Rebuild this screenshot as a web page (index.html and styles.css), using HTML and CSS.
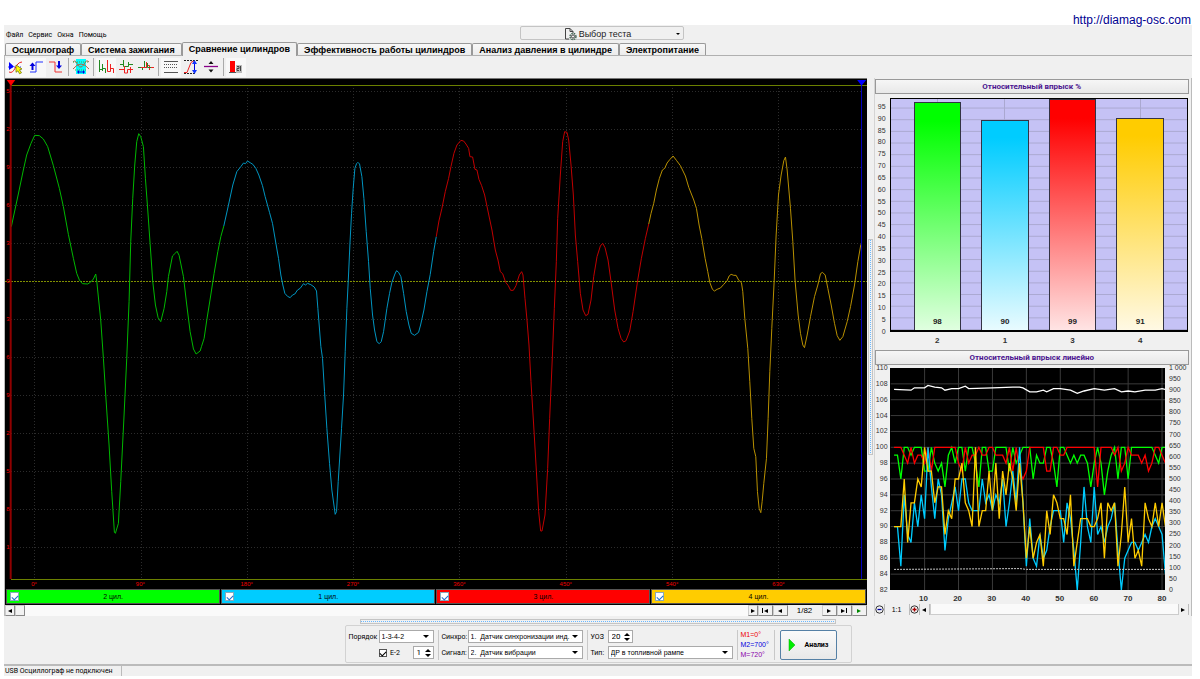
FILE: index.html
```html
<!DOCTYPE html>
<html lang="ru">
<head>
<meta charset="utf-8">
<title>Diamag</title>
<link rel="stylesheet" href="styles.css">
</head>
<body>
<header class="site"><a href="#">http://diamag-osc.com</a></header>
<div class="app">
  <div class="menu-row">
    <nav class="menu"><button>Файл</button><button>Сервис</button><button>Окна</button><button>Помощь</button></nav>
    <button class="test-select">
      <svg width="14" height="14" viewBox="0 0 14 14" fill="none" stroke="#444"><path d="M5 12H1.500V1.500H6L9 4.500V6M6 1.500V4.500H9"/><circle cx="9" cy="9.500" r="3" stroke="#465" stroke-width="1.400" stroke-dasharray="1.600 .8"/><circle cx="9" cy="9.500" r="1.600"/></svg>
      <span>Выбор теста</span><i class="down small"></i>
    </button>
  </div>
  <nav class="tabs">
    <button>Осциллограф</button><button>Система зажигания</button><button class="active">Сравнение цилиндров</button><button>Эффективность работы цилиндров</button><button>Анализ давления в цилиндре</button><button>Электропитание</button>
  </nav>
  <div class="toolbar">
    <button class="on" aria-label="Курсор"><svg viewBox="0 0 18 18" fill="none"><path d="M1 9H15" stroke="#33f" stroke-dasharray="1 1"/><path d="M2 14C8 17 8 4 15 4" stroke="#e22"/><path d="M2 4V12L7 8.500z" fill="#00f"/><path d="M9 7l6 4-2.500.8 2 3-2 1-1.500-3-2 1.500z" fill="#ff0" stroke="#660" stroke-width=".7"/></svg></button>
    <button class="on" aria-label="Фронт"><svg viewBox="0 0 18 18" fill="none"><path d="M3 14H9V4H16" stroke="#23f"/><path d="M5.500 12V6" stroke="#00d" stroke-width="2"/><path d="M2.500 8l3-3.500 3 3.500z" fill="#00d"/></svg></button>
    <button aria-label="Спад"><svg viewBox="0 0 18 18" fill="none"><path d="M2 4H8V14H15" stroke="#e33"/><path d="M12 3V8" stroke="#00d" stroke-width="2"/><path d="M9 7.500h6l-3 3.500z" fill="#00d"/></svg></button>
    <hr>
    <button aria-label="Окно"><svg viewBox="0 0 18 18" fill="none"><path d="M4 1H14V16H4z" fill="#0ff"/><path d="M1 4C5 0 5 10 9 9S13 0 17 4M1 11Q9 1 17 11" stroke="#a64"/><path d="M1 4H17M3 12H15" stroke="#3a5" stroke-dasharray="1 1"/><path d="M6 14h6" stroke="#00d"/><path d="M5 14l2-2v4zM13 14l-2-2v4z" fill="#00d"/></svg></button>
    <hr>
    <button class="on" aria-label="Вид 1"><svg viewBox="0 0 18 18" fill="none"><path d="M2.500 2V14M2.500 11.500H5.500M5.500 13V6M5.500 10.500H8.500V15" stroke="#282"/><path d="M10.500 2V13.500H13.500V6M13.500 10.500H16.500V15" stroke="#e22"/></svg></button>
    <button aria-label="Вид 2"><svg viewBox="0 0 18 18" fill="none"><path d="M3 6.500H6.500V2V8.500H11.500V4V6.500H16" stroke="#282"/><path d="M2 11.500H7.500V8V15H10.500V11.500H16M13.500 9V15" stroke="#e22"/></svg></button>
    <button aria-label="Вид 3"><svg viewBox="0 0 18 18" fill="none"><path d="M1 9.500H5.500V12M7.500 3V9.500H10" stroke="#282"/><path d="M4 9.500H9.500V4V7.500H12.500V12M12.500 9.500H17" stroke="#e22"/><path d="M10.500 5V9.500H14" stroke="#282"/></svg></button>
    <hr>
    <button class="on" aria-label="Линии"><svg viewBox="0 0 18 18" fill="none" stroke="#555"><path d="M2 3.500H16M2 14.500H16"/><path d="M2 6.500H16M2 9.500H16" stroke-dasharray="1 1"/></svg></button>
    <button aria-label="Размах"><svg viewBox="0 0 18 18" fill="none"><path d="M2 2.500H16M2 15.500H14" stroke="#222" stroke-dasharray="2 1"/><path d="M2 14.500H5L9 4.500Q11 2 14 6" stroke="#e22"/><path d="M12.500 4V14" stroke="#00d"/><path d="M10 6l2.500-4L15 6zM10 12l2.500 4L15 12z" fill="#13f"/></svg></button>
    <button aria-label="Середина"><svg viewBox="0 0 18 18"><path d="M2 8.500H16" stroke="#808" stroke-width="1.300"/><path d="M6.500 6L9 3l2.500 3zM6.500 11.500h5L9 14.500z" fill="#111"/></svg></button>
    <hr>
    <button class="on" aria-label="Гистограмма"><svg viewBox="0 0 18 18"><path d="M3 3h5v11H3z" fill="#f00"/><path d="M2 14.500H15" stroke="#555"/><path d="M9 7h6v8H9z" fill="#bbb"/><path d="M10 8.500h2v2h-2v2h2M13.500 8v5" stroke="#444" fill="none"/></svg></button>
  </div>

  <main class="main">
    <section class="scope">
      <div class="screen">
        <svg class="wave" viewBox="15 12 2583 1527" preserveAspectRatio="none">
          <path class="grid" d="M33 49H2583M33 163H2583M33 277H2583M33 391H2583M33 505H2583M33 733H2583M33 847H2583M33 961H2583M33 1075H2583M33 1189H2583M33 1303H2583M33 1417H2583M104 40V1512M424 40V1512M742 40V1512M1060 40V1512M1378 40V1512M1699 40V1512M2016 40V1512M2335 40V1512"/>
          <path class="edge" d="M33 31H2598M33 1512H2598"/>
          <path class="zero" d="M15 619H2598"/>
          <polyline class="green" points="34,455 55,357 70,285 80,240 93,205 104,181 118,182 130,192 143,215 160,272 178,340 190,395 205,478 220,550 230,595 238,615 247,626 263,627 272,621 280,612 287,597 290,618 302,735 310,850 318,975 327,1110 335,1250 343,1372 346,1375 355,1345 362,1220 372,1020 380,850 387,680 392,500 398,370 404,270 410,200 416,176 422,185 430,215 436,310 443,405 450,505 458,620 466,690 474,728 482,740 492,700 500,650 505,605 517,543 525,535 531,529 537,541 550,605 560,690 570,770 580,822 588,837 600,828 604,815 612,790 620,735 632,660 642,595 653,530 662,485 671,453"/>
          <g transform="translate(660 0)"><polyline class="blue" points="11,453 25,390 38,330 50,290 62,275 70,264 76,266 82,258 90,263 98,268 107,280 116,300 127,332 135,365 148,412 157,445 168,510 175,550 182,600 188,630 194,655 202,664 210,668 217,660 224,657 232,645 240,640 250,626 256,630 262,625 272,629 282,636 289,648 293,700 302,815 307,850 313,950 320,1060 328,1165 335,1245 345,1318 349,1310 354,1220 364,1060 370,960 375,830 380,700 385,600 389,510 394,415 399,340 404,280 409,266 413,262 418,267 425,305 431,370 438,470 445,560 450,640 457,720 463,765 470,800 477,806 483,800 490,770 500,700 508,655 515,622 524,597 529,587 535,592 542,605 550,655 558,710 566,750 573,775 583,781 595,772 601,750 611,705 620,650 630,598 640,530 648,485"/></g>
          <g transform="translate(1260 0)"><polyline class="red" points="48,485 56,438 65,400 75,350 85,310 92,275 101,235 110,210 122,196 130,198 137,207 145,220 149,245 157,246 164,283 170,285 176,313 184,332 193,360 203,408 215,465 225,525 233,555 240,590 247,596 256,622 264,632 271,646 279,646 287,632 297,600 304,590 308,600 314,670 320,735 326,810 332,920 340,1050 348,1185 355,1310 361,1368 365,1368 374,1320 382,1180 388,1030 395,870 402,700 408,560 412,430 420,300 427,200 433,170 440,172 445,195 452,270 459,360 465,480 472,560 480,655 488,705 496,722 503,718 512,675 520,605 530,545 540,513 547,505 554,518 563,555 572,620 583,705 593,760 602,790 610,801 617,797 628,768 638,710 652,615 663,550 675,490 685,447"/></g>
          <g transform="translate(1890 0)"><polyline class="gold" points="55,447 62,415 70,385 78,345 87,310 96,285 103,280 110,264 118,254 128,243 138,256 150,272 165,303 175,337 190,375 198,400 206,450 214,490 224,550 232,590 238,622 246,643 252,648 260,643 270,639 280,628 290,617 296,603 302,598 310,601 317,601 325,616 333,623 337,650 343,730 352,820 358,920 364,1030 370,1120 376,1145 381,1250 386,1300 391,1313 395,1280 400,1225 408,1150 413,1030 418,890 424,760 431,620 437,480 444,360 452,300 460,257 465,246 470,285 480,400 487,500 494,620 503,720 510,775 517,810 522,818 530,780 540,725 552,665 562,630 570,596 576,592 584,600 592,640 602,690 612,745 620,782 628,796 637,785 650,740 660,695 672,630 682,560 691,508"/></g>
          <path class="cursor-a" d="M32 20V1512"/><path class="cursor-b" d="M2583 20V1512"/>
          <path class="flag-a" d="M20 15H46L33 32z"/><path class="flag-b" d="M2570 15H2597L2583 32z"/>
        </svg>
        <div class="levels"><span>5</span><span>2</span><span>9</span><span>6</span><span>3</span><span>0</span><span>3</span><span>6</span><span>9</span><span>2</span><span>5</span><span>8</span><span>1</span></div>
        <div class="angles"><span>0°</span><span>90°</span><span>180°</span><span>270°</span><span>360°</span><span>450°</span><span>540°</span><span>630°</span></div>
      </div>
      <div class="cylinders">
        <label class="c2"><input type="checkbox" checked><span>2 цил.</span></label>
        <label class="c1"><input type="checkbox" checked><span>1 цил.</span></label>
        <label class="c3"><input type="checkbox" checked><span>3 цил.</span></label>
        <label class="c4"><input type="checkbox" checked><span>4 цил.</span></label>
      </div>
      <div class="scroll">
        <button class="narrow" aria-label="Влево"><i class="left"></i></button><button class="narrow" aria-label="Ползунок"></button><div class="track"></div><button class="narrow" aria-label="Вправо"><i class="right"></i></button>
        <button aria-label="Первый"><i class="bar"></i><i class="left"></i></button><button aria-label="Назад"><i class="left"></i></button><output>1/82</output><button aria-label="Вперёд"><i class="right"></i></button><button aria-label="Последний"><i class="right"></i><i class="bar"></i></button><button aria-label="Пуск"><i class="right go"></i></button>
      </div>
    </section>
    <div class="splitter vertical"></div>
    <aside class="side">
      <section class="card">
        <h2>Относительный впрыск %</h2>
        <div class="bars">
          <div class="bar-scale"><span>95</span><span>90</span><span>85</span><span>80</span><span>75</span><span>70</span><span>65</span><span>60</span><span>55</span><span>50</span><span>45</span><span>40</span><span>35</span><span>30</span><span>25</span><span>20</span><span>15</span><span>10</span><span>5</span><span>0</span></div>
          <div class="bar-plot">
            <div class="slot"><div class="b2" style="height:98.9%">98</div></div>
            <div class="slot"><div class="b1" style="height:90.9%">90</div></div>
            <div class="slot"><div class="b3" style="height:100%">99</div></div>
            <div class="slot"><div class="b4" style="height:91.9%">91</div></div>
          </div>
          <div class="bar-names"><span>2</span><span>1</span><span>3</span><span>4</span></div>
        </div>
      </section>
      <section class="card">
        <h2>Относительный впрыск линейно</h2>
        <div class="lines">
          <div class="line-scale"><span>110</span><span>108</span><span>106</span><span>104</span><span>102</span><span>100</span><span>98</span><span>96</span><span>94</span><span>92</span><span>90</span><span>88</span><span>86</span><span>84</span><span>82</span></div>
          <svg class="line-plot" viewBox="-0.200 0 81.200 28" preserveAspectRatio="none">
            <path class="mesh" d="M0 2H81M0 4H81M0 6H81M0 8H81M0 10H81M0 12H81M0 14H81M0 16H81M0 18H81M0 20H81M0 22H81M0 24H81M0 26H81M10 0V28M20 0V28M30 0V28M40 0V28M50 0V28M60 0V28M70 0V28M80 0V28"/>
            <g transform="scale(1 -1) translate(0 -110)">
              <polyline class="green" points="1,99 2,99 3,96 4,100 5,100 6,99 7,100 8,100 9,100 10,97 11,97 12,100 13,98 14,97 15,98 16,95 17,99 18,100 19,98 20,100 21,100 22,97 23,100 24,100 25,98 26,95 27,100 28,100 29,97 30,97 31,100 34,100 35,97 36,100 37,98 38,99 39,100 41,100 42,96 43,99 44,98 45,98 46,100 47,100 48,98 49,95 50,100 51,100 52,99 53,98 54,99 55,98 56,99 57,99 58,98 59,95 60,98 61,100 62,98 63,94 64,97 65,99 66,100 67,96 68,100 69,100 70,96 71,100 77,100 78,99 79,98 80,100 81,100"/>
              <polyline class="red" points="1,100 3,100 4,99 5,98 6,100 7,98 8,99 9,99 10,98 11,100 12,97 13,100 19,100 20,98 21,97 22,100 23,98 24,99 25,99 26,100 27,99 28,99 29,100 30,100 31,99 33,99 34,98 35,100 36,97 37,100 38,97 39,96 40,97 41,100 45,100 46,97 47,97 48,100 49,100 50,99 51,99 52,100 60,100 61,95 62,100 65,100 66,99 67,100 68,97 69,98 70,100 71,99 73,99 74,98 75,99 76,97 77,98 78,100 79,100 80,99 81,98"/>
              <polyline class="blue" points="1,90 2,90 3,85 4,94 5,89 6,88 7,93 8,90 9,94 10,91 11,100 12,95 13,91 14,96 15,94 16,87 17,91 18,93 19,95 20,92 21,96 22,96 23,93 24,92 26,92 27,96 28,93 29,94 30,92 31,94 32,93 33,96 34,90 35,93 36,97 37,93 38,100 39,93 40,85 41,91 42,86 43,85 44,89 45,86 46,87 47,90 48,92 50,92 51,88 52,93 53,91 54,87 55,82 56,88 57,95 58,90 59,88 60,95 61,89 62,90 63,88 64,90 65,91 66,93 67,87 68,82 69,86 70,87 71,88 72,88 73,87 74,88 75,89 76,88 77,90 78,91 79,90 80,89 81,84"/>
              <polyline class="gold" points="1,90 3,90 4,96 5,88 6,93 7,93 8,96 9,95 10,100 11,97 12,97 13,93 14,95 15,95 16,89 17,92 18,91 19,96 20,96 21,98 22,93 23,92 24,90 25,100 26,90 27,92 28,92 29,97 30,92 31,98 32,91 33,97 34,94 35,98 36,96 37,92 38,98 39,93 40,86 41,90 42,86 43,88 44,89 45,85 46,92 47,89 48,94 49,93 50,91 51,91 52,89 53,94 54,85 55,88 56,91 58,91 59,90 60,90 61,91 62,93 63,86 64,93 65,92 66,93 67,85 68,89 69,95 70,88 71,91 72,86 73,87 74,85 75,93 76,91 77,90 78,93 79,90 80,93 81,90"/>
              <polyline class="white" points="1,107.3 6,107.2 7,107.5 10,107.5 11,107.8 13,107.6 15,107.5 16,107.2 18,107.4 20,107.4 22,107.7 23,107.4 30,107.5 36,107.6 38,107.6 39,107.5 41,107 43,107 45,107.2 46,107 48,107.4 50,107.4 53,107.2 55,106.8 57,107.1 60,107.4 63,107.2 66,107.4 68,107 70,107.1 72,107 75,107.2 78,107.2 80,107.4 81,107.3"/>
              <polyline class="base" points="1,84.6 38,84.7 40,84.6 81,84.6"/>
            </g>
          </svg>
          <div class="pressure-scale"><span>1 000</span><span>950</span><span>900</span><span>850</span><span>800</span><span>750</span><span>700</span><span>650</span><span>600</span><span>550</span><span>500</span><span>450</span><span>400</span><span>350</span><span>300</span><span>250</span><span>200</span><span>150</span><span>100</span><span>50</span><span>0</span></div>
          <div class="frames"><span>10</span><span>20</span><span>30</span><span>40</span><span>50</span><span>60</span><span>70</span><span>80</span></div>
        </div>
        <div class="zoomer">
          <button aria-label="Уменьшить"><svg width="9" height="9" viewBox="0 0 9 9" fill="none" stroke="#333"><circle cx="4.500" cy="4.500" r="3.700"/><path d="M2.500 4.500h4" stroke="#00a" stroke-width="1.300"/></svg></button><button class="ratio">1:1</button><button aria-label="Увеличить"><svg width="9" height="9" viewBox="0 0 9 9" fill="none" stroke="#333"><circle cx="4.500" cy="4.500" r="3.700"/><path d="M2.500 4.500h4M4.500 2.500v4" stroke="#a00" stroke-width="1.300"/></svg></button><button aria-label="Влево"><i class="left"></i></button><div class="track"></div><button aria-label="Вправо"><i class="right"></i></button>
        </div>
      </section>
    </aside>
  </main>

  <div class="splitter horizontal"></div>
  <form class="settings">
    <div class="group order">
      <label for="order">Порядок</label><div class="pick"><select id="order"><option>1-3-4-2</option></select></div>
      <label class="check"><input type="checkbox" checked><span>E-2</span></label>
      <div class="spin"><input type="text" value="1" aria-label="Номер"><span class="arrows"><i class="up"></i><i class="down"></i></span></div>
    </div>
    <div class="group source">
      <label for="sync">Синхро:</label><div class="pick"><select id="sync"><option>1.&nbsp; Датчик синхронизации инд. .</option></select></div>
      <label for="signal">Сигнал:</label><div class="pick"><select id="signal"><option>2.&nbsp; Датчик вибрации</option></select></div>
    </div>
    <div class="group kind">
      <label for="uoz">УОЗ</label><div class="spin"><input id="uoz" type="text" value="20"><span class="arrows"><i class="up"></i><i class="down"></i></span></div>
      <label for="type">Тип:</label><div class="pick"><select id="type"><option>ДР в топливной рампе</option></select></div>
    </div>
    <div class="group marks"><span class="m1">M1=0°</span><span class="m2">M2=700°</span><span class="m3">M=720°</span></div>
    <button type="button" class="analyse"><svg width="8" height="12" viewBox="0 0 8 12"><path d="M1 0L7 6L1 12z" fill="#0e0" stroke="#0a0" stroke-width=".5"/></svg><span>Анализ</span></button>
  </form>
  <footer class="status"><span>USB Осциллограф не подключен</span><span></span></footer>
</div>
</body>
</html>
```
FILE: styles.css
```css
* { box-sizing: border-box; }
body {
  margin: 0; padding: 0 8px 3px 4px; height: 100vh; min-height: 560px;
  display: flex; flex-direction: column; background: #fff; color: #000;
  font-family: "Liberation Sans", Arial, sans-serif; font-size: 7px;
}
button, input, select { font: inherit; color: inherit; margin: 0; padding: 0; border: 0; border-radius: 0; background: none; }
button { display: flex; align-items: center; justify-content: center; }
.site { display: flex; justify-content: flex-end; padding: 15px 1px 0 0; font-size: 12px; line-height: 10px; }
.site a { color: #000090; text-decoration: none; position: relative; z-index: 1; }
.app { flex: 1; min-height: 0; display: flex; flex-direction: column; background: #f0f0f0; }

.menu-row { display: grid; grid-template-columns: 1fr 164px 1fr; padding: 1px 0 2px 8px; }
.menu { display: flex; align-items: flex-end; gap: 5px; margin-left: -6px; font-family: Roboto, sans-serif; line-height: 10px; }
.test-select { height: 14px; border: 1px solid #c4c4c4; border-radius: 2px; font-size: 9px; gap: 1px; display: grid; grid-template-columns: 1fr auto 1fr; color: #222; padding-left: 6px; }
.test-select svg { justify-self: end; }
.test-select i { justify-self: end; margin-right: 3px; }

.tabs { display: flex; align-items: flex-end; height: 14px; padding-left: 1px; border-bottom: 1px solid #b0b0b0; font-weight: bold; font-size: 9px; }
.tabs button { height: 12px; padding: 0 6px; border: 1px solid #999; border-bottom: 0; border-radius: 2px 2px 0 0; background: linear-gradient(#f8f8f8, #ececec); white-space: nowrap; }
.tabs .active { height: 14px; margin-bottom: -1px; padding-bottom: 1px; background: #f0f0f0; }

.toolbar { display: flex; align-items: center; height: 22px; padding-left: 1px; border-left: 1px solid #bbb; }
.toolbar button { width: 20px; height: 19px; }
.toolbar .on { background: #f8f8f8; }
.toolbar svg { width: 18px; height: 18px; }
.toolbar hr { width: 1px; height: 18px; margin: 0 2px; border: 0; background: #aaa; }

.main { flex: 1; min-height: 0; display: grid; grid-template-columns: minmax(0, 863fr) 7px minmax(0, 318fr); border-left: 1px solid #bbb; border-right: 1px solid #bbb; }
.scope { display: flex; flex-direction: column; min-height: 0; }
.screen { position: relative; flex: 1; min-height: 0; background: #000; border-top: 1px solid #777; color: #f00000; font-size: 6px; line-height: 8px; overflow: hidden; }
.wave { position: absolute; inset: 0; width: 100%; height: 100%; }
.wave path, .wave polyline, .line-plot path, .line-plot polyline { vector-effect: non-scaling-stroke; fill: none; }
.grid { stroke: #2c2c2c; stroke-dasharray: 1 2; shape-rendering: crispEdges; }
.edge { stroke: #6b8000; shape-rendering: crispEdges; }
.zero { stroke: #808f00; stroke-dasharray: 2 1; shape-rendering: crispEdges; }
.wave .green { stroke: #00b800; }
.wave .blue { stroke: #0095c0; }
.wave .red { stroke: #c00000; }
.wave .gold { stroke: #b89000; }
.cursor-a { stroke: #900000; stroke-width: 2; }
.cursor-b { stroke: #0000c0; }
.wave .flag-a { fill: #f00; }
.wave .flag-b { fill: #00f; }
.levels { position: absolute; inset: 0 auto 0 0; width: 6px; padding: 8px 0 37px; display: flex; flex-direction: column; justify-content: space-between; align-items: center; }
.angles { position: absolute; inset: auto 0 0 0; padding: 0 78px 0 19px; display: flex; justify-content: space-between; }
.angles span { width: 20px; text-align: center; }

.cylinders { display: flex; gap: 1px; padding: 1px; background: #000; }
.cylinders label { flex: 1; height: 15px; display: grid; grid-template-columns: 12px 1fr 12px; align-items: center; padding: 0 3px; border: 1px solid #555; }
.cylinders span { text-align: center; }
.cylinders input { appearance: none; width: 9px; height: 9px; background: #fff; border: 1px solid #8ab; display: grid; place-items: center; }
.cylinders input:checked::after { content: ""; width: 5px; height: 3px; border: solid #2070d0; border-width: 0 0 1px 1px; transform: rotate(-45deg); }
.c2 { background: #0f0; } .c1 { background: #0cf; } .c3 { background: #f00; } .c4 { background: #fc0; }

.scroll, .zoomer { display: flex; height: 11px; }
.scroll button { width: 15px; border: 1px solid #ccc; border-right-color: #888; border-bottom-color: #888; background: #f2f2f2; gap: 1px; }
.scroll .narrow { width: 10px; }
.scroll output { width: 34px; text-align: center; font-size: 8px; line-height: 11px; }
.track { flex: 1; background: #fafafa; }
i { display: inline-block; width: 0; height: 0; border: 0 solid transparent; }
i.left { border-width: 2px 4px 2px 0; border-right-color: #000; }
i.right { border-width: 2px 0 2px 4px; border-left-color: #000; }
i.up { border-width: 0 3px 3px; border-bottom-color: #000; }
i.down { border-width: 3px 3px 0; border-top-color: #000; }
i.down.small { border-width: 2px 2px 0; }
i.bar { width: 1px; height: 5px; background: #000; }
i.go { border-left-color: #080; }

.splitter.vertical { align-self: center; width: 5px; height: 40%; margin: 0 1px; border: 1px solid #c4c4c4; background: repeating-linear-gradient(#6ab8ff 0 1px, #f4f4f4 1px 2px) center / 1px 100% no-repeat; }
.splitter.horizontal { align-self: center; width: 40%; height: 5px; margin: 3px 0 1px; border: 1px solid #c4c4c4; background: repeating-linear-gradient(90deg, #6ab8ff 0 1px, #f4f4f4 1px 2px) center / 100% 1px no-repeat; }

.side { display: grid; grid-template-rows: minmax(0, 270fr) minmax(0, 265fr); gap: 1px; padding: 1px 2px 1px 0; border-left: 1px solid #d4d4d4; }
.card { display: flex; flex-direction: column; min-height: 0; }
h2 { margin: 0; height: 15px; border: 1px solid #999; background: linear-gradient(#f6f6f6, #e8e8e8); color: #4b1590; font-family: Roboto, sans-serif; font-size: 8px; line-height: 13px; text-align: center; }
.bars { flex: 1; min-height: 0; display: grid; grid-template: minmax(0, 1fr) 17px / 15px minmax(0, 1fr); padding: 4px 1px 0 0; color: #333; }
.bar-scale, .line-scale, .pressure-scale { display: flex; flex-direction: column; justify-content: space-between; line-height: 8px; }
.bar-scale { margin: 5px 4px -4px 0; text-align: right; }
.bar-plot { display: flex; gap: 20px; padding: 0 23px; border: 1px solid #000; border-bottom-width: 2px; background: linear-gradient(to top, #aaa8d0 1px, transparent 1px) 0 100% / 100% calc(500% / 99), #c5c2f5; }
.slot { flex: 1; display: flex; align-items: flex-end; background: linear-gradient(#aaa8d0, #aaa8d0) center / 1px 100% no-repeat; }
.slot div { width: 100%; border: 1px solid #334; border-bottom: 0; display: flex; align-items: flex-end; justify-content: center; padding-bottom: 4px; line-height: 9px; font-size: 8px; font-weight: bold; color: #222; }
.b2 { background: linear-gradient(#0f0 8%, #e0ffe0); } .b1 { background: linear-gradient(#0cf 8%, #e8fbff); }
.b3 { background: linear-gradient(#f00 8%, #ffe4e4); } .b4 { background: linear-gradient(#fc0 8%, #fff9e4); }
.bar-names { grid-column: 2; display: flex; gap: 20px; padding: 4px 24px 0; font-size: 8px; line-height: 10px; font-weight: bold; }
.bar-names span { flex: 1; text-align: center; }

.lines { flex: 1; min-height: 0; display: grid; grid-template: minmax(0, 1fr) 14px / 15px minmax(0, 1fr) 24px; padding-top: 3px; color: #333; }
.line-plot { width: 100%; height: 100%; background: #000; min-height: 0; }
.line-scale { margin: -4px 2px -4px 0; text-align: right; align-items: flex-end; }
.pressure-scale { margin: -4px 0 -4px 4px; }
.mesh { stroke: #3a3a3a; shape-rendering: crispEdges; }
.line-plot polyline { stroke-width: 1.3px; }
.line-plot .green { stroke: #0f0; } .line-plot .red { stroke: #f00; } .line-plot .blue { stroke: #0cf; }
.line-plot .gold { stroke: #fc0; } .line-plot .white { stroke: #fff; }
.line-plot .base { stroke: #ccc; stroke-width: 1px; stroke-dasharray: 2 1; }
.frames { grid-column: 1 / -1; display: flex; justify-content: space-between; padding: 4px 20px 0 42px; font-size: 8px; line-height: 10px; font-weight: bold; }
.frames span { width: 14px; text-align: center; }
.zoomer button { width: 10px; border-right: 1px solid #bbb; }
.zoomer .ratio { width: 25px; }
.zoomer .track { border: 1px solid #ccc; border-top: 0; }

.settings { align-self: center; height: 38px; margin-bottom: 1px; display: flex; align-items: center; padding: 3px 14px 2px 3px; border: 1px solid #d2d2d2; border-radius: 2px; font-family: Roboto, sans-serif; }
.group { display: grid; gap: 2px; align-items: center; height: 30px; padding-right: 4px; margin-right: 3px; border-right: 1px solid #c8c8c8; }
.order { grid-template-columns: 28px 32px 21px; }
.order .pick { grid-column: 2 / 4; }
.order .check { grid-column: 1 / 3; display: flex; align-items: center; justify-content: center; gap: 3px; padding-left: 20px; }
.check input { width: 8px; height: 8px; appearance: none; background: #fff; border: 1px solid #555; display: grid; place-items: center; }
.check input:checked::after { content: ""; width: 5px; height: 3px; border: solid #000; border-width: 0 0 1px 1px; transform: rotate(-45deg); }
.source { grid-template-columns: 24px 115px; }
.kind { grid-template-columns: 15px 125px; }
.pick, .spin { position: relative; height: 13px; background: #fff; border: 1px solid #aaa; }
.pick select { appearance: none; width: 100%; height: 11px; padding: 0 10px 0 2px; display: block; font-family: "Liberation Sans", Arial, sans-serif; line-height: 11px; }
.pick::after { content: ""; position: absolute; right: 4px; top: 4px; border: 3px solid transparent; border-top-color: #000; border-bottom: 0; pointer-events: none; }
.spin { display: flex; align-items: center; width: 25px; }
.order .spin { width: 21px; }
.spin input { width: 100%; min-width: 0; height: 11px; padding-left: 3px; font-size: 8px; }
.arrows { display: flex; flex-direction: column; gap: 2px; padding-right: 2px; }
.marks { grid-template-rows: repeat(3, 1fr); gap: 0; min-width: 34px; font-family: "Liberation Sans", Arial, sans-serif; }
.m1 { color: #e00; } .m2 { color: #00d; } .m3 { color: #80a; }
.analyse { width: 57px; height: 30px; margin-left: 2px; gap: 9px; border: 1px solid #5580a5; border-radius: 2px; background: linear-gradient(#fafafa, #e8e8e8); font-weight: bold; }

.status { display: flex; height: 12px; border-top: 2px solid #bbb; line-height: 10px; font-family: Roboto, sans-serif; }
.status span { min-width: 118px; padding-left: 1px; border-right: 1px solid #bbb; white-space: nowrap; }
.status span + span { flex: 1; border-right: 0; }
```
